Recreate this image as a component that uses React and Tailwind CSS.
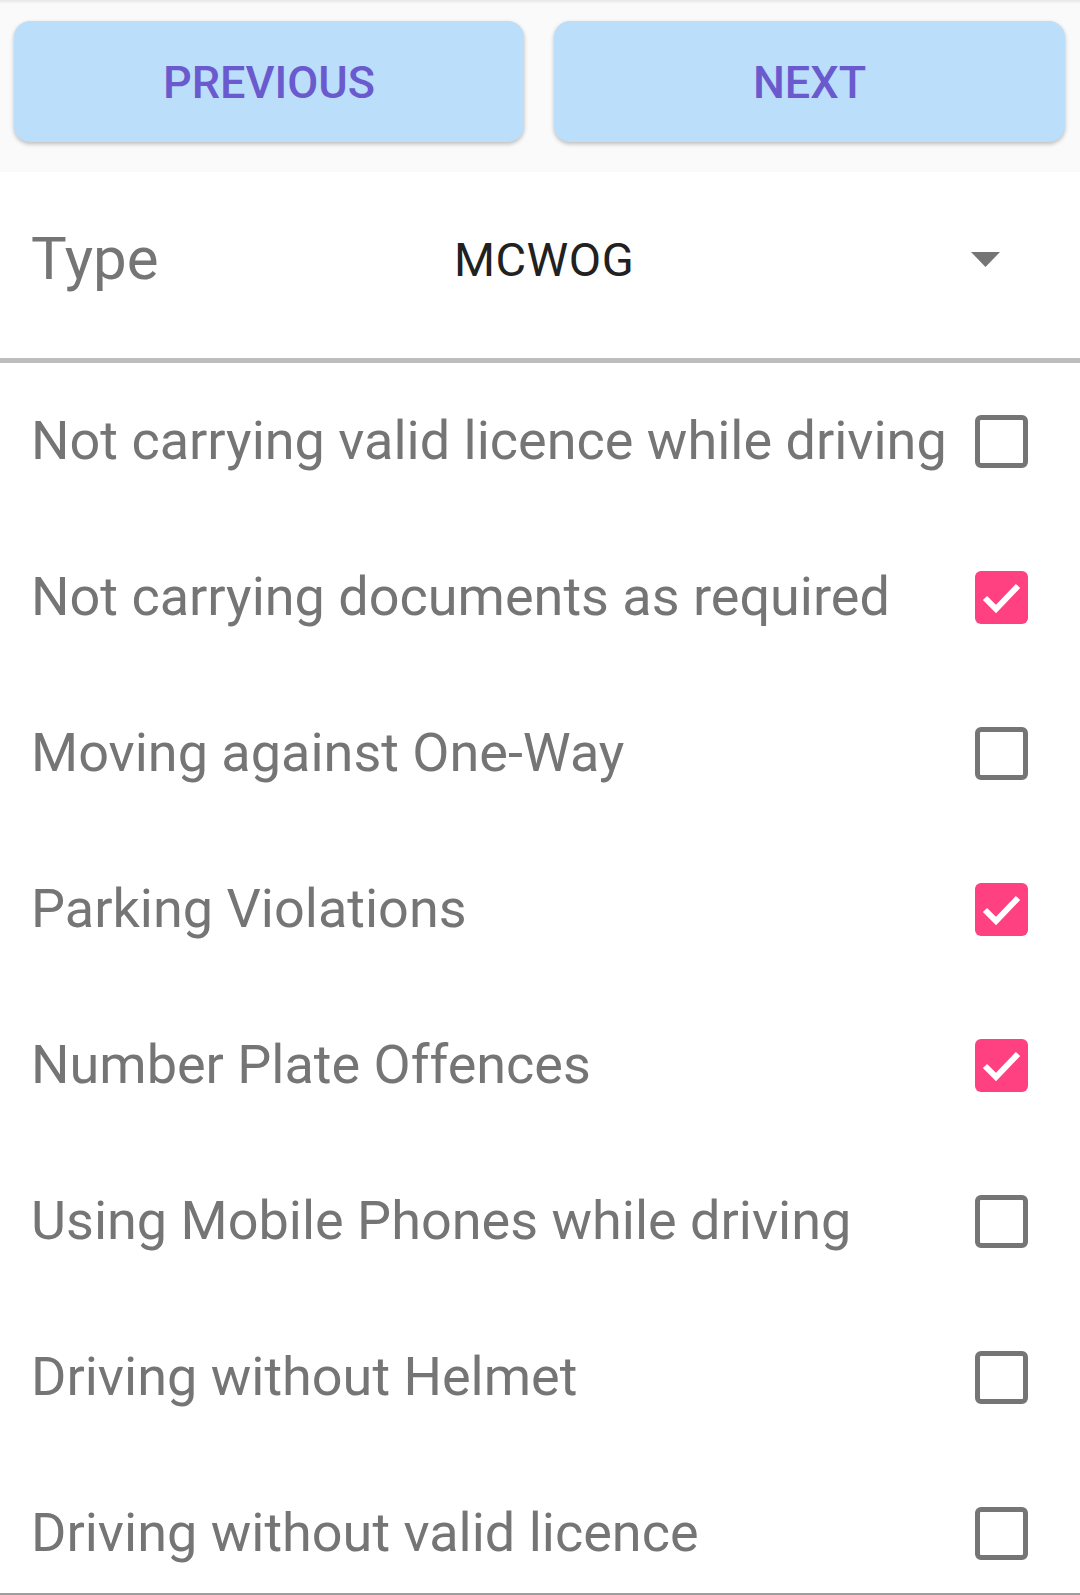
import React, { useState } from 'react';

const ITEMS = [
    { label: 'Not carrying valid licence while driving', checked: false },
    { label: 'Not carrying documents as required', checked: true },
    { label: 'Moving against One-Way', checked: false },
    { label: 'Parking Violations', checked: true },
    { label: 'Number Plate Offences', checked: true },
    { label: 'Using Mobile Phones while driving', checked: false },
    { label: 'Driving without Helmet', checked: false },
    { label: 'Driving without valid licence', checked: false },
];

const CheckBox = ({ checked, onClick }) => (
    <button onClick={onClick} className="w-[53px] h-[53px] shrink-0 flex items-center justify-center">
        {checked ? (
            <div className="w-[53px] h-[53px] rounded-[6px] bg-[#ff4081] flex items-center justify-center">
                <svg width="53" height="53" viewBox="0 0 53 53">
                    <path d="M10 27 L21 38 L43 15" fill="none" stroke="#fff" strokeWidth="6" />
                </svg>
            </div>
        ) : (
            <div className="w-[53px] h-[53px] rounded-[6px] border-[5px] border-[#757575]" />
        )}
    </button>
);

const App = () => {
    const [items, setItems] = useState(ITEMS);

    const toggle = i => setItems(items.map((it, j) => (j === i ? { ...it, checked: !it.checked } : it)));

    return (
        <div className="w-[1080px] h-[1595px] flex flex-col overflow-hidden bg-white" style={{ fontFamily: 'Roboto, "Noto Sans", sans-serif' }}>
            {/* button bar */}
            <div className="h-[172px] shrink-0 bg-[#fafafa] flex flex-col">
                <div className="h-[4px] bg-gradient-to-b from-[#e6e6e6] to-[#fafafa]" />
                <div className="flex gap-[30px] px-[14px] pt-[17px]">
                    <button className="w-[510px] h-[121px] pt-[3px] rounded-[16px] bg-[#bbdefb] shadow-[0_2px_4px_rgba(0,0,0,0.25)] text-[45px] font-medium text-[#6a5acd]">
                        PREVIOUS
                    </button>
                    <button className="w-[511px] h-[121px] pt-[3px] rounded-[16px] bg-[#bbdefb] shadow-[0_2px_4px_rgba(0,0,0,0.25)] text-[45px] font-medium text-[#6a5acd]">
                        NEXT
                    </button>
                </div>
            </div>

            {/* type spinner */}
            <div className="h-[186px] shrink-0 flex items-center pl-[31px] pr-[80px] pb-[12px]">
                <span className="w-[423px] text-[60px] text-[#757575] leading-none">Type</span>
                <span className="flex-1 text-[47px] text-[#212121] leading-none tracking-[0.5px]">MCWOG</span>
                <svg width="29" height="15" viewBox="0 0 29 15">
                    <path d="M0 0 H29 L14.5 15 Z" fill="#757575" />
                </svg>
            </div>
            <div className="h-[5px] shrink-0 bg-[#bdbdbd]" />

            {/* offences */}
            <div className="flex-1 min-h-0 overflow-hidden">
                {items.map((it, i) => (
                    <div key={it.label} className="h-[156px] flex items-center justify-between pl-[31px] pr-[52px]">
                        <span className="text-[54px] text-[#757575] leading-none">{it.label}</span>
                        <CheckBox checked={it.checked} onClick={() => toggle(i)} />
                    </div>
                ))}
            </div>
            <div className="h-[2px] shrink-0 bg-[#9e9e9e]" />
        </div>
    );
};

export default App;
